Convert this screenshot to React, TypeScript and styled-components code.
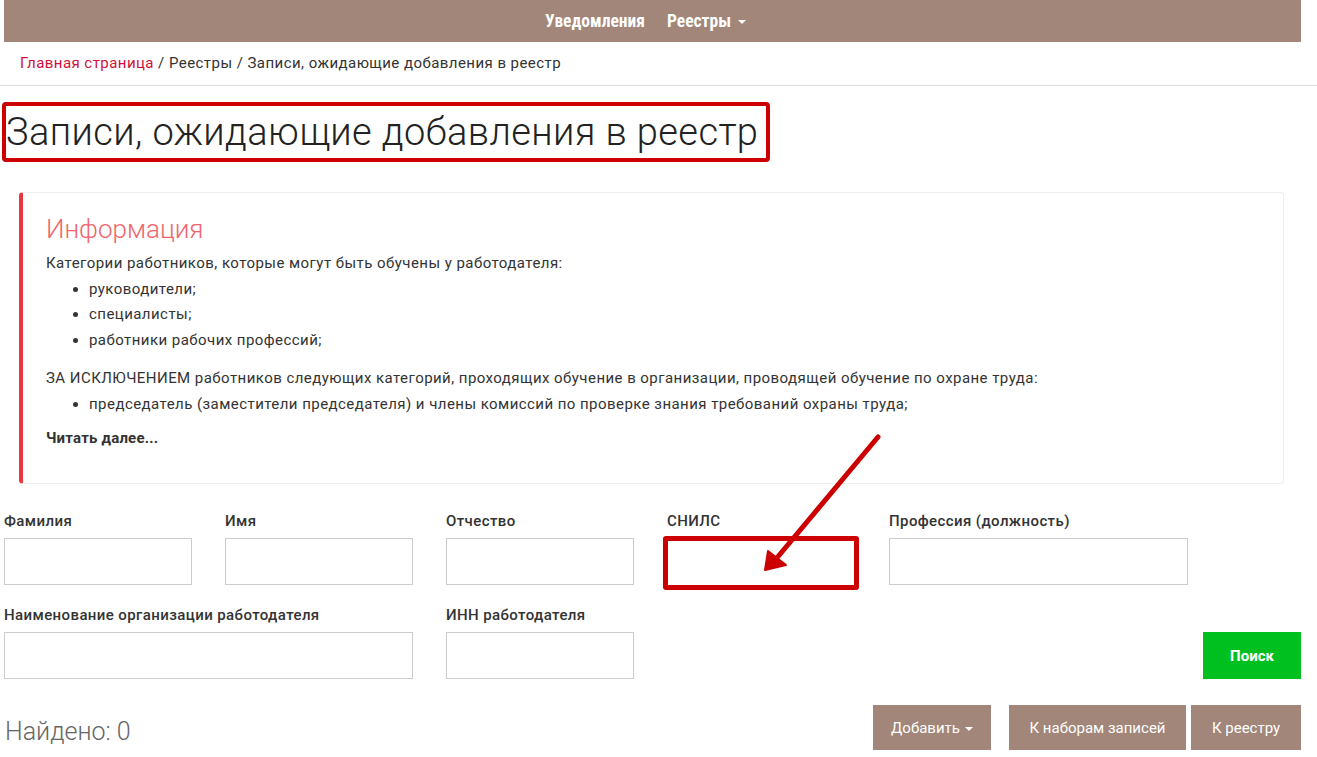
import React from "react";
import styled, { createGlobalStyle } from "styled-components";

const BROWN = "#a18679";
const RED_MARK = "#cc0000";

const GlobalStyle = createGlobalStyle`
  html, body {
    margin: 0;
    padding: 0;
    background: #fff;
  }
  body {
    font-family: Roboto, "Liberation Sans", sans-serif;
    color: #333;
  }
  * {
    box-sizing: border-box;
  }
`;

const Page = styled.div`
  position: relative;
  width: 1317px;
  min-height: 757px;
  overflow: hidden;
`;

const NavBar = styled.nav`
  margin: 0 16px 0 4px;
  height: 42px;
  background: ${BROWN};
  display: flex;
  align-items: center;
  justify-content: center;
  gap: 22px;
  padding-right: 14px;
`;

const NavLink = styled.a`
  color: #fff;
  font-family: "Liberation Sans Narrow", "Roboto Condensed", Roboto, sans-serif;
  font-weight: 700;
  font-size: 17.5px;
  display: flex;
  align-items: center;
  gap: 7px;
  cursor: pointer;
`;

const Caret = styled.span`
  width: 0;
  height: 0;
  border-left: 4px solid transparent;
  border-right: 4px solid transparent;
  border-top: 4px solid #fff;
  margin-top: 2px;
`;

const Breadcrumbs = styled.div`
  height: 44px;
  padding: 12px 0 0 20px;
  border-bottom: 1px solid #ddd;
  font-size: 15px;
  letter-spacing: 0.45px;
  color: #333;
`;

const Crumb = styled.a<{ $active?: boolean }>`
  color: ${(p) => (p.$active ? "#d0103a" : "#333")};
  text-decoration: none;
`;

const Main = styled.main`
  padding: 0 16px 0 4px;
`;

const Heading = styled.h1`
  display: inline-block;
  margin: 16px 0 0 -2px;
  padding: 0 8px 0 0;
  border: 4px solid ${RED_MARK};
  border-radius: 4px;
  font-weight: 300;
  font-size: 38px;
  line-height: 52px;
  color: #222;
  letter-spacing: 0.4px;
`;

const InfoPanel = styled.section`
  margin: 30px 17px 0 15px;
  height: 292px;
  border: 1px solid #eee;
  border-left: 4px solid #e8383f;
  border-radius: 4px;
  padding: 18px 20px 0 23px;
  font-size: 15px;
  letter-spacing: 0.45px;
  line-height: 25.5px;
`;

const InfoTitle = styled.h3`
  margin: 0 0 4px;
  font-weight: 300;
  font-size: 26px;
  letter-spacing: 0;
  line-height: 36px;
  color: #f0656c;
`;

const Para = styled.p`
  margin: 0;
`;

const List = styled.ul<{ $gap: number }>`
  margin: 0 0 ${(p) => p.$gap}px;
  padding-left: 43px;
`;

const ReadMore = styled.a`
  font-weight: 700;
  letter-spacing: 0.2px;
  color: #333;
  cursor: pointer;
`;

const FormRow = styled.div<{ $top: number }>`
  display: flex;
  align-items: flex-end;
  gap: 33px;
  margin-top: ${(p) => p.$top}px;
`;

const Field = styled.label<{ $w: number }>`
  display: flex;
  flex-direction: column;
  width: ${(p) => p.$w}px;
  font-size: 15px;
  font-weight: 500;
  letter-spacing: 0.4px;
  color: #333;
`;

const LabelText = styled.span`
  line-height: 20px;
  margin-bottom: 7px;
  white-space: nowrap;
`;

const Input = styled.input`
  height: 47px;
  width: 100%;
  border: 1px solid #ccc;
  background: #fff;
  padding: 6px 10px;
  font-size: 15px;
  outline: none;
`;

const Marked = styled.div`
  margin: -2px -3px -5px -4px;
  border: 5px solid ${RED_MARK};
  border-radius: 3px;
  height: 54px;
  display: flex;
`;

const MarkedInput = styled(Input)`
  border: none;
  height: 100%;
`;

const Button = styled.button<{ $green?: boolean; $w: number; $h: number }>`
  width: ${(p) => p.$w}px;
  height: ${(p) => p.$h}px;
  border: none;
  background: ${(p) => (p.$green ? "#00c020" : BROWN)};
  color: #fff;
  font-family: Roboto, "Liberation Sans", sans-serif;
  font-size: 15px;
  font-weight: ${(p) => (p.$green ? 700 : 400)};
  display: flex;
  align-items: center;
  justify-content: center;
  gap: 5px;
  cursor: pointer;
`;

const SearchButton = styled(Button)`
  margin-left: auto;
`;

const Footer = styled.div`
  display: flex;
  align-items: center;
  margin-top: 26px;
`;

const Found = styled.div`
  font-weight: 300;
  font-size: 25px;
  color: #666;
  padding: 8px 0 0 1px;
`;

const Actions = styled.div`
  margin-left: auto;
  display: flex;
  gap: 5px;
`;

const AddButton = styled(Button)`
  margin-right: 13px;
`;

const Arrow = styled.svg`
  position: absolute;
  left: 750px;
  top: 425px;
  pointer-events: none;
`;

export default function App() {
  return (
    <Page>
      <GlobalStyle />
      <NavBar>
        <NavLink>Уведомления</NavLink>
        <NavLink>
          Реестры <Caret />
        </NavLink>
      </NavBar>
      <Breadcrumbs>
        <Crumb $active>Главная страница</Crumb> / <Crumb>Реестры</Crumb> /{" "}
        <span>Записи, ожидающие добавления в реестр</span>
      </Breadcrumbs>
      <Main>
        <Heading>Записи, ожидающие добавления в реестр</Heading>
        <InfoPanel>
          <InfoTitle>Информация</InfoTitle>
          <Para>Категории работников, которые могут быть обучены у работодателя:</Para>
          <List $gap={13}>
            <li>руководители;</li>
            <li>специалисты;</li>
            <li>работники рабочих профессий;</li>
          </List>
          <Para>
            ЗА ИСКЛЮЧЕНИЕМ работников следующих категорий, проходящих обучение в организации,
            проводящей обучение по охране труда:
          </Para>
          <List $gap={9}>
            <li>
              председатель (заместители председателя) и члены комиссий по проверке знания
              требований охраны труда;
            </li>
          </List>
          <ReadMore>Читать далее...</ReadMore>
        </InfoPanel>

        <FormRow $top={27}>
          <Field $w={188}>
            <LabelText>Фамилия</LabelText>
            <Input />
          </Field>
          <Field $w={188}>
            <LabelText>Имя</LabelText>
            <Input />
          </Field>
          <Field $w={188}>
            <LabelText>Отчество</LabelText>
            <Input />
          </Field>
          <Field $w={189}>
            <LabelText>СНИЛС</LabelText>
            <Marked>
              <MarkedInput />
            </Marked>
          </Field>
          <Field $w={299}>
            <LabelText>Профессия (должность)</LabelText>
            <Input />
          </Field>
        </FormRow>

        <FormRow $top={20}>
          <Field $w={409}>
            <LabelText>Наименование организации работодателя</LabelText>
            <Input />
          </Field>
          <Field $w={188}>
            <LabelText>ИНН работодателя</LabelText>
            <Input />
          </Field>
          <SearchButton $green $w={98} $h={47}>
            Поиск
          </SearchButton>
        </FormRow>

        <Footer>
          <Found>Найдено: 0</Found>
          <Actions>
            <AddButton $w={118} $h={45}>
              Добавить <Caret />
            </AddButton>
            <Button $w={177} $h={45}>К наборам записей</Button>
            <Button $w={110} $h={45}>К реестру</Button>
          </Actions>
        </Footer>
      </Main>

      <Arrow width="150" height="160" viewBox="0 0 150 160">
        <line x1="128" y1="12" x2="26" y2="134" stroke={RED_MARK} strokeWidth="5" strokeLinecap="round" />
        <polygon points="15,145 18,126 36,140" fill={RED_MARK} stroke={RED_MARK} strokeWidth="2" strokeLinejoin="round" />
      </Arrow>
    </Page>
  );
}
